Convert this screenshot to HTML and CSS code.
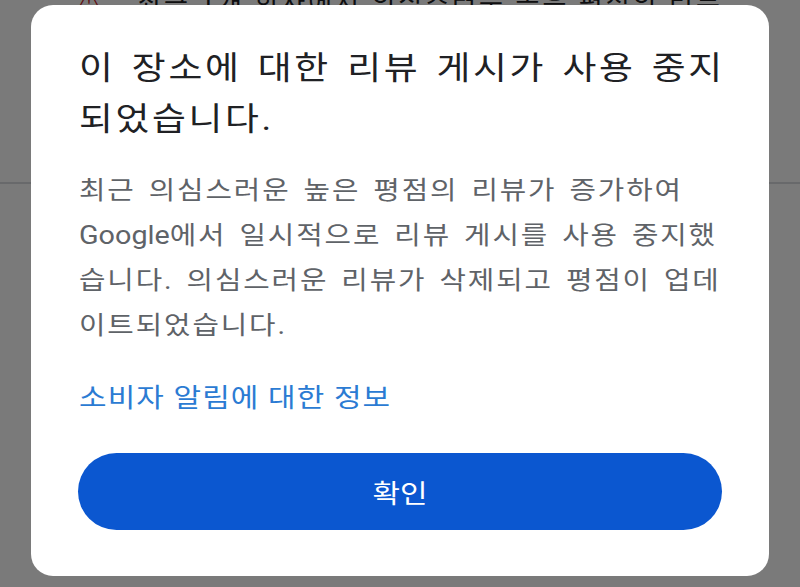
FILE: index.html
```html
<!DOCTYPE html>
<html lang="ko">
<head>
<meta charset="utf-8">
<link rel="stylesheet" href="styles.css">
</head>
<body>
<div class="page">
  <div class="bg-row">
    <span class="bg-icon">⚠</span>
    <span class="bg-text">최근 1개 회사에서 의심스러운 높은 평점의 리뷰</span>
  </div>
  <div class="bg-divider"></div>
</div>
<div class="scrim">
  <div class="dialog">
    <h1 class="title wide">이 장소에 대한 리뷰 게시가 사용 중지<br>되었습니다.</h1>
    <p class="body wide">최근 의심스러운 높은 평점의 리뷰가 증가하여<br><span class="latin">Google</span>에서 일시적으로 리뷰 게시를 사용 중지했<br>습니다. 의심스러운 리뷰가 삭제되고 평점이 업데<br>이트되었습니다.</p>
    <div class="link-row"><a class="link wide">소비자 알림에 대한 정보</a></div>
    <button class="btn"><span class="btn-label">확인</span></button>
  </div>
</div>
</body>
</html>
```
FILE: styles.css
```css
html, body {
  margin: 0;
  padding: 0;
  width: 800px;
  height: 587px;
  overflow: hidden;
  font-family: "Roboto", "Noto Sans CJK KR", "Noto Sans", sans-serif;
}
.page {
  width: 800px;
  height: 587px;
  background: #ffffff;
}
.bg-row {
  display: flex;
  align-items: center;
  gap: 34px;
  padding-left: 78px;
  height: 20px;
  margin-top: -10px;
  font-size: 26px;
  letter-spacing: 3px;
  color: #202124;
}
.bg-icon {
  color: #c5221f;
  font-size: 22px;
}
.bg-divider {
  margin-top: 172px;
  height: 2px;
  background: #dadce0;
}
.scrim {
  position: absolute;
  inset: 0;
  background: rgba(0, 0, 0, 0.52);
}
.dialog {
  position: absolute;
  left: 31px;
  top: 5px;
  width: 738px;
  height: 571px;
  box-sizing: border-box;
  background: #ffffff;
  border-radius: 22px;
  padding: 38px 40px 0 48px;
  display: flex;
  flex-direction: column;
}
.wide {
  transform: scaleX(1.15);
  transform-origin: left center;
  white-space: nowrap;
}
.title {
  margin: 0;
  font-size: 32px;
  font-weight: 400;
  line-height: 51px;
  letter-spacing: 2.3px;
  word-spacing: 4px;
  color: #202124;
}
.body {
  margin: 23px 0 0 0;
  font-size: 25px;
  line-height: 45px;
  letter-spacing: 1.65px;
  word-spacing: 3.5px;
  color: #5f6368;
}
.latin {
  letter-spacing: 0;
}
.link-row {
  margin-top: 30px;
  height: 40px;
  line-height: 40px;
}
.link {
  display: inline-block;
  font-size: 26px;
  letter-spacing: 1px;
  color: #2b7bd3;
}
.btn {
  margin: 35px 0 0 -1px;
  width: 644px;
  height: 77px;
  border: none;
  border-radius: 39px;
  background: #0b57d0;
  color: #ffffff;
  font-family: inherit;
  font-size: 26px;
  padding: 0;
}
.btn-label {
  display: inline-block;
  transform: scaleX(1.15);
}
```
